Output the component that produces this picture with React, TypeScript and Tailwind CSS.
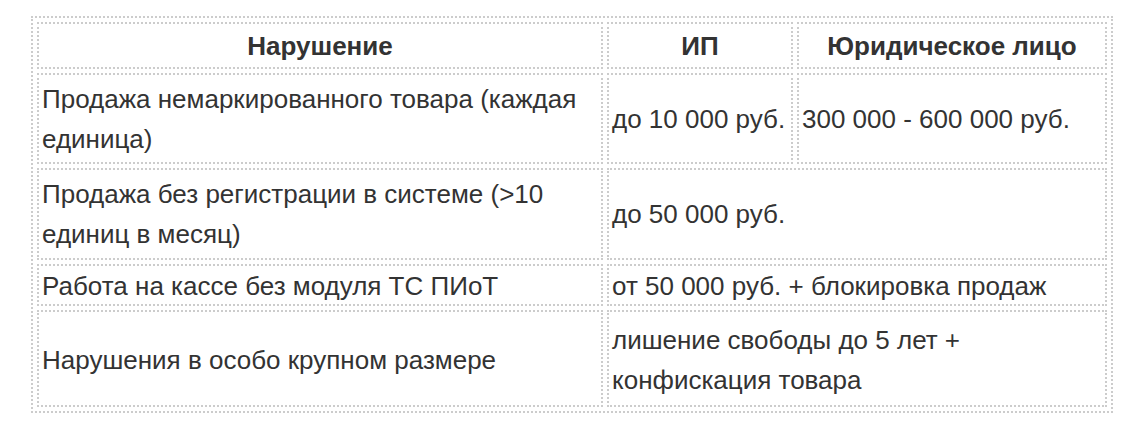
import React from "react";

const td =
  "border-2 border-dotted border-[#cccccc] px-[3px] py-0 align-middle text-left";
const tdLow =
  "border-2 border-dotted border-[#cccccc] px-[3px] pt-[3px] pb-0 align-middle text-left";
const tdRow3 =
  "border-2 border-dotted border-[#cccccc] px-[3px] pt-[3px] pb-[1px] leading-[34px] align-middle text-left";
const th =
  "border-2 border-dotted border-[#cccccc] px-[3px] py-0 align-middle text-center font-bold";

export default function App() {
  return (
    <div className="w-[1134px] h-[433px] bg-white pt-[16px] pl-[31px]">
      <table
        className="table-fixed w-[1081px] border-separate border-spacing-[4px] border-2 border-dotted border-[#cccccc] text-[#333333] text-[26px] leading-[40px]"
        style={{ fontFamily: '"Liberation Sans", Arial, sans-serif' }}
      >
        <colgroup>
          <col className="w-[566px]" />
          <col className="w-[186px]" />
          <col className="w-[310px]" />
        </colgroup>
        <tbody>
          <tr className="h-[47px]">
            <th className={th}>Нарушение</th>
            <th className={th}>ИП</th>
            <th className={th}>Юридическое лицо</th>
          </tr>
          <tr className="h-[91px]">
            <td className={td}>Продажа немаркированного товара (каждая единица)</td>
            <td className={td}>до 10 000 руб.</td>
            <td className={td}>300 000 - 600 000 руб.</td>
          </tr>
          <tr className="h-[92px]">
            <td className={td}>Продажа без регистрации в системе (&gt;10 единиц в месяц)</td>
            <td className={td} colSpan={2}>до 50 000 руб.</td>
          </tr>
          <tr className="h-[42px]">
            <td className={tdRow3}>Работа на кассе без модуля ТС ПИоТ</td>
            <td className={tdRow3} colSpan={2}>от 50 000 руб. + блокировка продаж</td>
          </tr>
          <tr className="h-[97px]">
            <td className={tdLow}>Нарушения в особо крупном размере</td>
            <td className={tdLow} colSpan={2}>
              лишение свободы до 5 лет +<br />конфискация товара
            </td>
          </tr>
        </tbody>
      </table>
    </div>
  );
}
